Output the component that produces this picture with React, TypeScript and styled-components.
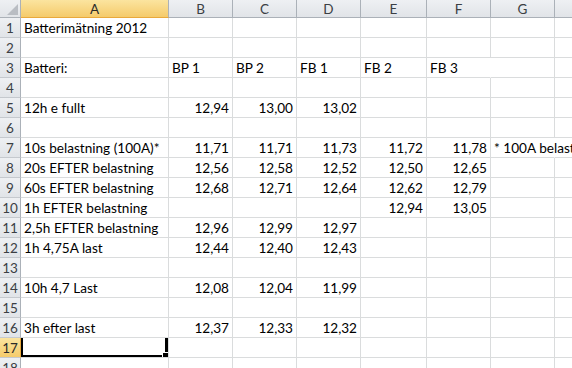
import React from 'react';
import styled, { createGlobalStyle, css } from 'styled-components';

const GlobalStyle = createGlobalStyle`
    html, body {
        margin: 0;
        padding: 0;
        background: #fff;
    }
    body {
        font-family: Lato, "Liberation Sans", sans-serif;
    }
`;

const COLS = ['A', 'B', 'C', 'D', 'E', 'F', 'G', 'H'];
const WIDTHS = [148, 64, 64, 64, 66, 64, 64, 64];
const ROW_COUNT = 18;
const ACTIVE_COL = 'A';
const ACTIVE_ROW = 17;

// rad -> kolumn -> värde
const DATA: Record<number, Record<string, string>> = {
    1: { A: 'Batterimätning 2012' },
    3: { A: 'Batteri:', B: 'BP 1', C: 'BP 2', D: 'FB 1', E: 'FB 2', F: 'FB 3' },
    5: { A: '12h e fullt', B: '12,94', C: '13,00', D: '13,02' },
    7: { A: '10s belastning (100A)*', B: '11,71', C: '11,71', D: '11,73', E: '11,72', F: '11,78', G: '* 100A belastning' },
    8: { A: '20s EFTER belastning', B: '12,56', C: '12,58', D: '12,52', E: '12,50', F: '12,65' },
    9: { A: '60s EFTER belastning', B: '12,68', C: '12,71', D: '12,64', E: '12,62', F: '12,79' },
    10: { A: '1h EFTER belastning', E: '12,94', F: '13,05' },
    11: { A: '2,5h EFTER belastning', B: '12,96', C: '12,99', D: '12,97' },
    12: { A: '1h 4,75A last', B: '12,44', C: '12,40', D: '12,43' },
    14: { A: '10h 4,7 Last', B: '12,08', C: '12,04', D: '11,99' },
    16: { A: '3h efter last', B: '12,37', C: '12,33', D: '12,32' },
};

const isNumber = (v: string) => /^[\d,]+$/.test(v);

const Window = styled.div`
    width: 572px;
    height: 368px;
    overflow: hidden;
    background: #fff;
`;

const Sheet = styled.div`
    display: grid;
    grid-template-columns: 21px ${WIDTHS.map((w) => `${w}px`).join(' ')};
    grid-template-rows: 18px;
    grid-auto-rows: 20px;
    width: max-content;
`;

const headerBg = css`
    background: linear-gradient(#eef0f3, #e1e4e8);
    color: #3b3f44;
`;

const activeBg = css`
    background: linear-gradient(#fbe49f, #f5cb6b);
    color: #2a2a2a;
`;

const Corner = styled.div`
    ${headerBg};
    box-sizing: border-box;
    border-right: 1px solid #abb1b8;
    border-bottom: 1px solid #abb1b8;
    display: flex;
    align-items: flex-end;
    justify-content: flex-end;
    padding: 0 2px 2px 0;
`;

const ColHeader = styled.div<{ $active?: boolean }>`
    ${(p) => (p.$active ? activeBg : headerBg)};
    box-sizing: border-box;
    border-right: 1px solid #abb1b8;
    border-bottom: 1px solid ${(p) => (p.$active ? '#e9a93c' : '#abb1b8')};
    display: flex;
    align-items: center;
    justify-content: center;
    font-size: 13.5px;
`;

const RowHeader = styled.div<{ $active?: boolean }>`
    ${(p) => (p.$active ? activeBg : headerBg)};
    box-sizing: border-box;
    border-right: 1px solid ${(p) => (p.$active ? '#e9a93c' : '#abb1b8')};
    border-bottom: 1px solid #c5c9ce;
    display: flex;
    align-items: center;
    justify-content: center;
    font-size: 13.5px;
    padding-top: 1px;
`;

const Cell = styled.div<{ $align: 'left' | 'right'; $spill?: boolean }>`
    position: relative;
    box-sizing: border-box;
    border-right: 1px solid ${(p) => (p.$spill ? 'transparent' : '#dadcdd')};
    border-bottom: 1px solid #dadcdd;
    padding: 1px 3px 0 3px;
    font-size: 13.6px;
    line-height: 19px;
    white-space: nowrap;
    overflow: ${(p) => (p.$spill ? 'visible' : 'hidden')};
    text-align: ${(p) => p.$align};
    color: #000;
`;

const Selection = styled.div`
    position: absolute;
    top: -2px;
    left: 0;
    right: 0;
    bottom: -1px;
    border: 2px solid #000;
    border-right-width: 3px;
    border-bottom-width: 3px;
    box-sizing: border-box;
    pointer-events: none;
`;

const FillHandle = styled.div`
    position: absolute;
    right: -4px;
    bottom: -4px;
    width: 5px;
    height: 5px;
    background: #000;
    border: 1px solid #fff;
`;

const SelectAll = () => (
    <svg width="11" height="11" viewBox="0 0 11 11">
        <polygon points="11,0 11,11 0,11" fill="#b9bdc3" />
    </svg>
);

const App = () => {
    const rows = Array.from({ length: ROW_COUNT }, (_, i) => i + 1);

    return (
        <>
        <GlobalStyle />
        <Window>
            <Sheet>
                <Corner><SelectAll /></Corner>
                {COLS.map((c) => (
                    <ColHeader key={c} $active={c === ACTIVE_COL}>{c}</ColHeader>
                ))}
                {rows.map((r) => (
                    <React.Fragment key={r}>
                        <RowHeader $active={r === ACTIVE_ROW}>{r}</RowHeader>
                        {COLS.map((c, ci) => {
                            const value = DATA[r]?.[c] ?? '';
                            const next = COLS[ci + 1];
                            const spill = value !== '' && !isNumber(value) && c !== 'A' && !(next && DATA[r]?.[next]);
                            const active = r === ACTIVE_ROW && c === ACTIVE_COL;
                            return (
                                <Cell key={c} $align={isNumber(value) ? 'right' : 'left'} $spill={spill}>
                                    {value}
                                    {active && (
                                        <Selection>
                                            <FillHandle />
                                        </Selection>
                                    )}
                                </Cell>
                            );
                        })}
                    </React.Fragment>
                ))}
            </Sheet>
        </Window>
        </>
    );
};

export default App;
